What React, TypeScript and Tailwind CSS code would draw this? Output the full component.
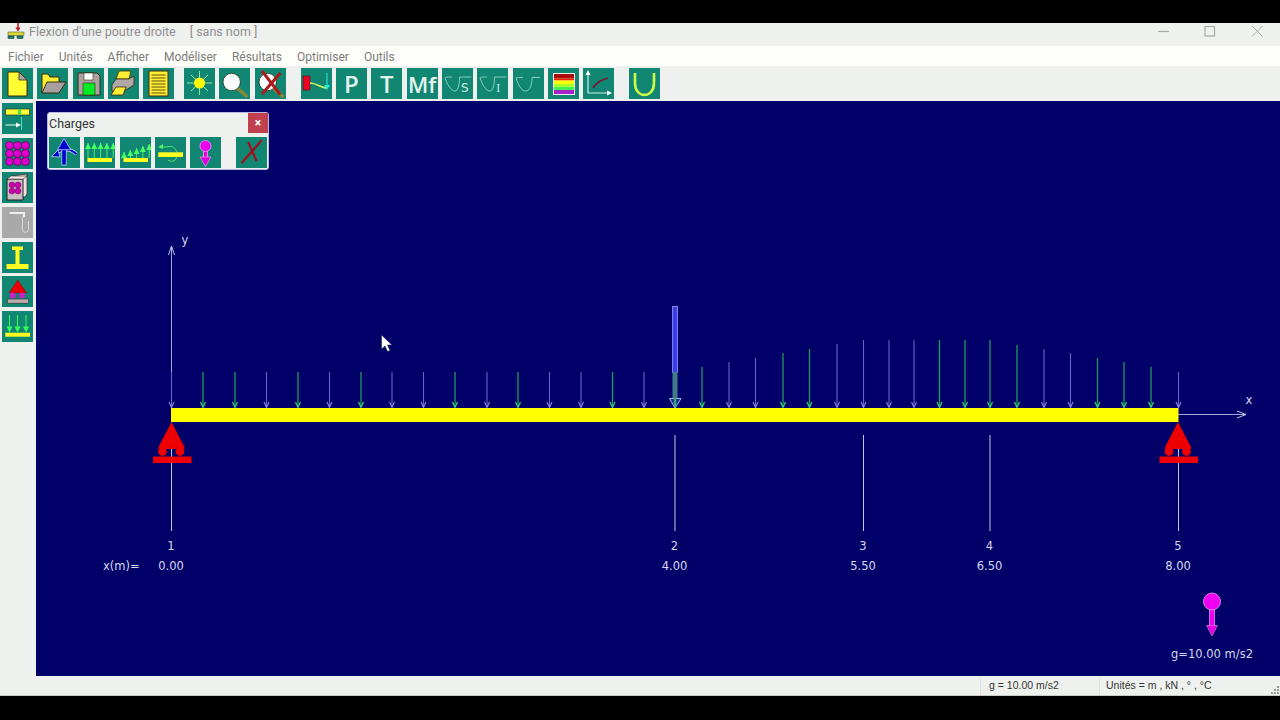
import React from "react";

const UI_FONT = "font-['Roboto','Noto_Sans',sans-serif]";

const Btn = ({ className = "", children }: { className?: string; children?: React.ReactNode }) => (
  <div className={`w-[31px] h-[31px] shrink-0 flex items-center justify-center relative ${className || "bg-[#118672]"}`}>
    {children}
  </div>
);

const Ico = ({ children }: { children: React.ReactNode }) => (
  <svg width="31" height="31" viewBox="0 0 31 31" className="absolute left-0 top-0">
    {children}
  </svg>
);

const Dark = "#3a2a10";

const NewDoc = () => (
  <Ico>
    <path d="M6 4H17L25 12V28H6Z" fill="#ffff33" stroke={Dark} strokeWidth="1" />
    <path d="M17 4L25 12H17Z" fill="#b0a8a0" stroke={Dark} strokeWidth="0.8" />
  </Ico>
);
const OpenFolder = () => (
  <Ico>
    <path d="M5 25V6H11L13 9H22V14" fill="#ffee33" stroke={Dark} strokeWidth="1" />
    <path d="M5 25L10 14H29L22 25Z" fill="#a8a0a0" stroke={Dark} strokeWidth="1" />
  </Ico>
);
const Floppy = () => (
  <Ico>
    <path d="M5 5H24L27 8V27H5Z" fill="#aaa2a2" stroke={Dark} strokeWidth="1" />
    <rect x="11" y="5" width="9" height="7" fill="#ffffff" stroke={Dark} strokeWidth="0.6" />
    <rect x="10" y="15" width="12" height="12" fill="#00ee22" stroke={Dark} strokeWidth="0.6" />
  </Ico>
);
const Printer = () => (
  <Ico>
    <path d="M11 3H23L21 11H8Z" fill="#ffee33" stroke={Dark} strokeWidth="0.8" />
    <path d="M8 11H21L26 8V17L16 23H4V17Z" fill="#b0a8a8" stroke={Dark} strokeWidth="0.8" />
    <path d="M8 19H18L15 27H3Z" fill="#ffee33" stroke={Dark} strokeWidth="0.8" />
  </Ico>
);
const Listing = () => (
  <Ico>
    <rect x="6" y="3" width="19" height="25" fill="#ffee33" stroke={Dark} strokeWidth="1" />
    {[7, 10, 13, 16, 19, 22, 25].map((y) => (
      <line key={y} x1="8.5" x2="22.5" y1={y} y2={y} stroke={Dark} strokeWidth="0.8" />
    ))}
  </Ico>
);
const Sun = () => (
  <Ico>
    <g stroke="#a8f0a0" strokeWidth="0.9">
      <line x1="3" y1="15" x2="28" y2="15" />
      <line x1="15.5" y1="3" x2="15.5" y2="27" />
      <line x1="7" y1="7" x2="24" y2="23" />
      <line x1="24" y1="7" x2="7" y2="23" />
    </g>
    <circle cx="15.5" cy="15" r="5.5" fill="#ffff00" />
  </Ico>
);
const Loupe = ({ crossed }: { crossed?: boolean }) => (
  <Ico>
    <line x1="18" y1="20" x2="28.5" y2="29" stroke="#88883a" strokeWidth="3.4" />
    <circle cx="12.7" cy="14" r="8.7" fill="#ffffff" stroke="#223322" strokeWidth="0.8" />
    {crossed && (
      <g stroke="#aa1a1a" strokeWidth="3">
        <line x1="7" y1="3" x2="25.3" y2="26.7" />
        <line x1="25.3" y1="5" x2="7" y2="26" />
      </g>
    )}
  </Ico>
);
const Deflect = () => (
  <Ico>
    <rect x="2" y="8" width="7" height="14" fill="#ee0022" stroke="#551111" strokeWidth="0.6" />
    <path d="M9 15C15 15 20 20 26 20" fill="none" stroke="#d8f060" strokeWidth="1.6" />
    <line x1="26" y1="5" x2="26" y2="19" stroke="#22eedd" strokeWidth="1" />
    <path d="M23 17H29L26 22Z" fill="#22eedd" />
  </Ico>
);
const Letter = ({ t, size }: { t: string; size: string }) => (
  <span className={`font-['Open_Sans',sans-serif] font-semibold text-[#e4f2ee] leading-none ${size}`}>{t}</span>
);
const Cup = ({ sub }: { sub?: string }) => (
  <>
    <Ico>
      <path
        d={
          sub
            ? "M3 10C5 16 9 23 13 23C16 23 17.5 17 17.5 9H29.5M3 10C3 9 5 9 10 9"
            : "M3 10C5 16 8 23 12.5 23C17 23 19 17 19 9.5H27M3 10C3 9.5 5 9.5 10 9.5"
        }
        fill="none"
        stroke="#8ed8c4"
        strokeWidth="0.9"
      />
    </Ico>
    {sub && (
      <span
        className={`absolute left-[19px] top-[14px] text-[12px] leading-none text-[#d4ece4] ${
          sub === "I" ? "font-['Liberation_Serif',serif]" : "font-['DejaVu_Sans',sans-serif]"
        }`}
      >
        {sub}
      </span>
    )}
  </>
);
const Rainbow = () => (
  <Ico>
    <rect x="5.5" y="5.5" width="21" height="21" fill="#eee" stroke="#eeeeee" strokeWidth="1" />
    <rect x="6" y="6" width="20" height="4.5" fill="#aa0a0a" />
    <rect x="6" y="10.5" width="20" height="2" fill="#ee2200" />
    <rect x="6" y="12.5" width="20" height="3.5" fill="#ffff00" />
    <rect x="6" y="16" width="20" height="3" fill="#aaff33" />
    <rect x="6" y="19" width="20" height="3" fill="#44ee55" />
    <rect x="6" y="22" width="20" height="4" fill="#aa22cc" />
  </Ico>
);
const Graph = () => (
  <Ico>
    <path d="M5 5V25H26" fill="none" stroke="#cfeee8" strokeWidth="1.2" />
    <path d="M2.5 7L5 2L7.5 7Z" fill="#ffffff" />
    <path d="M24 22.5L29 25L24 27.5Z" fill="#ffffff" />
    <path d="M10 20C14 14 18 12 25 10" fill="none" stroke="#7a1830" strokeWidth="1.8" />
  </Ico>
);
const UShape = () => (
  <Ico>
    <path d="M6 5V15C6 31 25 31 25 15V5" fill="none" stroke="#ccff44" strokeWidth="2.6" />
  </Ico>
);

const BeamSection = () => (
  <Ico>
    <rect x="3.5" y="6" width="24" height="6" fill="#ffff33" stroke="#333" strokeWidth="0.7" />
    <rect x="16" y="6" width="3" height="6" fill="#44dd44" />
    <line x1="3.5" y1="22" x2="17" y2="22" stroke="#eeffee" strokeWidth="1" />
    <path d="M14 19.5L19 22L14 24.5Z" fill="#ffffff" />
    <line x1="19.5" y1="14" x2="19.5" y2="27" stroke="#44ddcc" strokeWidth="1" />
  </Ico>
);
const Dots = () => (
  <Ico>
    {[7.5, 15.5, 23.5].map((y) =>
      [7.5, 15.5, 23.5].map((x) => (
        <circle key={`${x}-${y}`} cx={x} cy={y} r="4" fill="#dd00cc" stroke="#441144" strokeWidth="0.7" />
      ))
    )}
  </Ico>
);
const Stack = () => (
  <Ico>
    <path d="M9 4L25 2V22L23 25H9Z" fill="#f4e0e0" stroke="#333" strokeWidth="0.8" />
    <path d="M5 7H21V28H5Z" fill="#c8c0c0" stroke="#222" strokeWidth="1" />
    <path d="M5 7L9 4H25L21 7Z" fill="#f8e8e8" stroke="#333" strokeWidth="0.6" />
    {[13, 19].map((y) =>
      [10, 16].map((x) => <circle key={`${x}-${y}`} cx={x} cy={y} r="3" fill="#cc00aa" stroke="#551155" strokeWidth="0.4" />)
    )}
  </Ico>
);
const Pipe = () => (
  <Ico>
    <path d="M7.5 6H22V10" fill="none" stroke="#eeeeee" strokeWidth="2.2" />
    <path d="M20.5 10V23C20.5 26 26.5 26 26.5 23V14" fill="none" stroke="#dddddd" strokeWidth="0.9" />
  </Ico>
);
const IBeam = () => (
  <Ico>
    <rect x="10" y="4.5" width="11" height="3.5" fill="#ffff22" />
    <rect x="13.5" y="8" width="4" height="14" fill="#ffff22" />
    <rect x="4.5" y="22" width="22" height="5" fill="#ffff22" />
  </Ico>
);
const Support = () => (
  <Ico>
    <path d="M15.7 4L24.7 17H7Z" fill="#ee0000" stroke="#661111" strokeWidth="0.5" />
    <circle cx="10.7" cy="19.5" r="3" fill="#cc22cc" />
    <circle cx="20" cy="19.5" r="3" fill="#cc22cc" />
    <rect x="5.3" y="23" width="21.4" height="4.3" rx="1" fill="#bbb0b0" stroke="#333" strokeWidth="0.7" />
  </Ico>
);
const DownLoads = () => (
  <Ico>
    {[7.5, 15.5, 24].map((x) => (
      <g key={x}>
        <line x1={x} y1="4" x2={x} y2="18" stroke="#33ff55" strokeWidth="1" />
        <path d={`M${x - 3} 15.5H${x + 3}L${x} 21.5Z`} fill="#33ff55" />
      </g>
    ))}
    <rect x="3.3" y="21.7" width="24.7" height="4" fill="#ffff22" />
  </Ico>
);

const UpArrowLoad = () => (
  <Ico>
    <path d="M7 17C12 11 21 11 27.5 17" fill="none" stroke="#bfe8ff" strokeWidth="3.4" />
    <path d="M7 17C12 11 21 11 27.5 17" fill="none" stroke="#0000cc" strokeWidth="2" />
    <path d="M9 13L2.5 19.5L11 20Z" fill="#0000cc" stroke="#bfe8ff" strokeWidth="0.7" />
    <rect x="12.8" y="12" width="4.4" height="16" fill="#0000cc" stroke="#bfe8ff" strokeWidth="0.7" />
    <path d="M15 1.5L21.7 12.7H8.5Z" fill="#0000cc" stroke="#bfe8ff" strokeWidth="0.7" />
  </Ico>
);
const GreenUp = ({ tops }: { tops: number[] }) => (
  <Ico>
    {tops.map((t, i) => {
      const x = 3 + i * 6.3;
      return (
        <g key={i}>
          <line x1={x + 1} y1={t} x2={x + 1} y2="21" stroke="#44ff66" strokeWidth="0.9" />
          <path d={`M${x - 2} ${t + 6}L${x + 1} ${t}L${x + 4} ${t + 6}Z`} fill="#44ff66" />
        </g>
      );
    })}
    <rect x="3.5" y="21" width="24.5" height="4" fill="#ffff22" />
  </Ico>
);
const MomentLoad = () => (
  <Ico>
    <rect x="3.3" y="15.3" width="24.7" height="4.7" fill="#ffff22" />
    <path d="M5 10H12C18 8 20 11 22 15M22 20C20 25 16 25 13 23" fill="none" stroke="#55ee66" strokeWidth="0.9" />
    <path d="M8 7L3 10L8 12Z" fill="#55ee66" />
  </Ico>
);
const MassLoad = () => (
  <Ico>
    <rect x="13.5" y="13" width="4" height="9" fill="#ee00dd" stroke="#f8b0f8" strokeWidth="0.7" />
    <circle cx="15.5" cy="9" r="5.5" fill="#ee00ee" stroke="#f8b0f8" strokeWidth="0.7" />
    <path d="M10 20H21L15.5 29.5Z" fill="#dd00dd" stroke="#f8b0f8" strokeWidth="0.6" />
  </Ico>
);
const RedCross = () => (
  <Ico>
    <g stroke="#a01020" strokeWidth="2.2">
      <line x1="25.7" y1="3.3" x2="5.7" y2="26" />
      <line x1="12.3" y1="5.3" x2="20.7" y2="24.3" />
    </g>
  </Ico>
);

type Tool = { gap: string; node: React.ReactNode };

const TOOLS: Tool[] = [
  { gap: "ml-0", node: <NewDoc /> },
  { gap: "ml-[4.33px]", node: <OpenFolder /> },
  { gap: "ml-[4.33px]", node: <Floppy /> },
  { gap: "ml-[4.33px]", node: <Printer /> },
  { gap: "ml-[4.33px]", node: <Listing /> },
  { gap: "ml-[9.67px]", node: <Sun /> },
  { gap: "ml-[4.33px]", node: <Loupe /> },
  { gap: "ml-[4.33px]", node: <Loupe crossed /> },
  { gap: "ml-[15px]", node: <Deflect /> },
  { gap: "ml-[4.33px]", node: <Letter t="P" size="text-[24px]" /> },
  { gap: "ml-[4.33px]", node: <Letter t="T" size="text-[24px]" /> },
  { gap: "ml-[4.33px]", node: <Letter t="Mf" size="text-[22px]" /> },
  { gap: "ml-[4.33px]", node: <Cup sub="S" /> },
  { gap: "ml-[4.33px]", node: <Cup sub="I" /> },
  { gap: "ml-[4.33px]", node: <Cup /> },
  { gap: "ml-[4.33px]", node: <Rainbow /> },
  { gap: "ml-[4.33px]", node: <Graph /> },
  { gap: "ml-[15px]", node: <UShape /> },
];

const MENUS = ["Fichier", "Unités", "Afficher", "Modéliser", "Résultats", "Optimiser", "Outils"];

const GREEN = "#1f9a58";
const BLUE = "#6464d4";

// x, top of the shaft, green or not
const LOADS: [number, number, boolean][] = [
  [171.5, 372, false], [203, 372, true], [235, 372, true], [266.5, 372, false], [298, 372, true],
  [329.5, 372, false], [361, 372, true], [392, 372, false], [423.5, 372, false], [455, 372, true],
  [487, 372, false], [518, 372, true], [549.5, 372, false], [581, 372, false], [612.5, 372, true],
  [644, 372, false], [702, 367, true], [729, 362, false], [755.5, 358, false], [783, 353, true],
  [809.5, 349, true], [837, 344, false], [863.5, 340, false], [889, 340, false], [914, 340, false],
  [939.5, 340, true], [965, 340, true], [990, 340, true], [1017, 345, true], [1044, 349, false],
  [1070.5, 353, false], [1097.5, 358, true], [1124, 362, true], [1151, 367, true], [1178.5, 372, false],
];

const NODES: [number, string, string][] = [
  [171, "1", "0.00"],
  [674.5, "2", "4.00"],
  [863, "3", "5.50"],
  [989.5, "4", "6.50"],
  [1178, "5", "8.00"],
];

const SupportMark = ({ x }: { x: number }) => (
  <g fill="#ee0000">
    <path d={`M${x} 422L${x + 13} 447V449H${x - 13}V447Z`} />
    <circle cx={x - 9} cy="451.5" r="4.4" />
    <circle cx={x + 8.5} cy="451.5" r="4.4" />
    <rect x={x - 18.5} y="456.5" width="38.5" height="6.5" />
  </g>
);

const Drawing = () => (
  <svg width="1244" height="575" viewBox="36 101 1244 575" className="absolute left-0 top-0">
    {/* axes */}
    <line x1="171.5" y1="246" x2="171.5" y2="408" stroke="#a8a8e0" strokeWidth="1" />
    <path d="M168.5 255L171.5 246L174.5 255" fill="none" stroke="#c8c8f0" strokeWidth="1" />
    <line x1="1178" y1="414.5" x2="1246" y2="414.5" stroke="#a8a8e0" strokeWidth="1" />
    <path d="M1237 411L1246 414.5L1237 418" fill="none" stroke="#c8c8f0" strokeWidth="1" />

    {LOADS.map(([x, top, green]) => (
      <g key={x} fill="none" stroke={green ? GREEN : BLUE} strokeWidth={green ? 1.3 : 1.1}>
        <line x1={x} y1={top} x2={x} y2="407" />
        <path d={`M${x - 2.5} 402L${x} 407.5L${x + 2.5} 402`} stroke={green ? "#33cc77" : "#8888dd"} />
      </g>
    ))}

    {/* point load */}
    <rect x="672.5" y="306.5" width="5" height="66" fill="#3c3cf0" stroke="#9a9af0" strokeWidth="0.8" />
    <rect x="672.5" y="372" width="5" height="30" fill="#3f7a88" />
    <path d="M669.5 398.5H681L675 408Z" fill="#10307a" stroke="#9ab8f0" strokeWidth="1" />
    <line x1="675" y1="398" x2="675" y2="407" stroke="#3f9a88" strokeWidth="2.5" />

    <rect x="171" y="408" width="1007.5" height="14" fill="#ffff00" />

    {/* node lines */}
    {[171.5, 675, 863.5, 990, 1178.5].map((x) => (
      <line key={x} x1={x} y1="435" x2={x} y2="531" stroke="#c4c4e4" strokeWidth="1" />
    ))}
    <SupportMark x={171.5} />
    <SupportMark x={1178} />
    <line x1="171.5" y1="449" x2="171.5" y2="456" stroke="#c4c4e4" strokeWidth="1" />
    <line x1="1178.5" y1="449" x2="1178.5" y2="456" stroke="#c4c4e4" strokeWidth="1" />

    <g fill="#d8d8ec" fontFamily="'DejaVu Sans', sans-serif" fontSize="11.5">
      <text x="185" y="244" textAnchor="middle">y</text>
      <text x="1249" y="404" textAnchor="middle">x</text>
      {NODES.map(([x, n, v]) => (
        <React.Fragment key={n}>
          <text x={x} y="550" textAnchor="middle">{n}</text>
          <text x={x} y="570" textAnchor="middle">{v}</text>
        </React.Fragment>
      ))}
      <text x="103" y="570">x(m)=</text>
      <text x="1212" y="658" textAnchor="middle">g=10.00 m/s2</text>
    </g>

    {/* gravity */}
    <rect x="1209.5" y="609" width="5" height="18" fill="#ee00ee" stroke="#f0a0f0" strokeWidth="0.7" />
    <circle cx="1212" cy="601.5" r="8.5" fill="#f000f0" stroke="#e8a0e8" strokeWidth="0.8" />
    <path d="M1206.5 625.5H1217.5L1212 636Z" fill="#e000e0" stroke="#e8a0e8" strokeWidth="0.5" />

    {/* mouse pointer */}
    <path d="M381.5 335V349L385 346L387.5 351.5L390 350.5L387.5 345H392Z" fill="#ffffff" stroke="#111133" strokeWidth="0.5" />
  </svg>
);

const App: React.FC = () => {
  return (
    <div className="w-[1280px] h-[720px] bg-black pt-[23px] overflow-hidden">
      <div className={`h-[673px] flex flex-col bg-[#eff1ee] ${UI_FONT}`}>
        {/* title bar */}
        <div className="h-[23px] shrink-0 flex items-center pl-[7px] pb-[5px] text-[#8e8e8e] text-[12.5px]">
          <svg width="18" height="16" viewBox="0 0 18 16" className="shrink-0 self-start">
            <line x1="11" y1="0" x2="11" y2="6" stroke="#cc1111" strokeWidth="1.5" />
            <path d="M8.5 4.5H13.5L11 8.5Z" fill="#cc1111" />
            <rect x="1" y="9" width="16" height="3.5" fill="#d8d830" stroke="#444" strokeWidth="0.5" />
            <rect x="1" y="13" width="6" height="2.5" fill="#118672" stroke="#222" strokeWidth="0.5" />
            <rect x="10" y="13" width="6" height="2.5" fill="#118672" stroke="#222" strokeWidth="0.5" />
          </svg>
          <span className="ml-[4px] whitespace-pre">Flexion d'une poutre droite</span>
          <span className="ml-[14px] whitespace-pre">[ sans nom ]</span>
          <svg width="122" height="14" viewBox="0 0 122 14" className="ml-auto self-start mt-[1px]" fill="none" stroke="#aaaaaa">
            <line x1="0" y1="7.5" x2="11" y2="7.5" strokeWidth="1.2" />
            <rect x="47" y="2.5" width="9.5" height="9.5" strokeWidth="1.2" />
            <path d="M94 2L104.5 12.5M104.5 2L94 12.5" strokeWidth="1" />
          </svg>
        </div>

        {/* menu bar */}
        <div className="h-[20px] shrink-0 bg-[#fefefa] flex items-center pl-[8px] pt-[1px] gap-[15px] text-[12px] text-[#7c7c7c]">
          {MENUS.map((m) => (
            <span key={m}>{m}</span>
          ))}
        </div>

        {/* toolbar */}
        <div className="h-[35px] shrink-0 flex items-start pt-[2px] pl-[2px]">
          {TOOLS.map((t, i) => (
            <div key={i} className={t.gap}>
              <Btn>{t.node}</Btn>
            </div>
          ))}
        </div>

        <div className="flex-1 flex min-h-0">
          {/* left toolbar */}
          <div className="w-[36px] shrink-0 flex flex-col gap-[3.67px] pt-[2px] pl-[2px]">
            <Btn><BeamSection /></Btn>
            <Btn><Dots /></Btn>
            <Btn><Stack /></Btn>
            <Btn className="bg-[#a9a9a9]"><Pipe /></Btn>
            <Btn><IBeam /></Btn>
            <Btn><Support /></Btn>
            <Btn><DownLoads /></Btn>
          </div>

          {/* canvas */}
          <div className="flex-1 relative bg-[#000068] overflow-hidden">
            <Drawing />
            {/* floating palette */}
            <div className="absolute left-[11px] top-[11px] w-[222px] h-[58px] bg-[#eff1ee] rounded-[3px] border border-[#b8b8e0]">
              <div className="absolute left-[1px] top-[2px] text-[12.5px] text-[#333333]">Charges</div>
              <div className="absolute right-0 top-0 w-[20px] h-[20px] bg-[#c0404f] flex items-center justify-center text-white text-[12px] font-bold leading-none">
                ×
              </div>
              <div className="absolute left-[1px] top-[24px] flex gap-[4.33px]">
                <Btn><UpArrowLoad /></Btn>
                <Btn><GreenUp tops={[6, 6, 6, 6, 6]} /></Btn>
                <Btn><GreenUp tops={[15, 13, 11, 9, 7]} /></Btn>
                <Btn><MomentLoad /></Btn>
                <Btn><MassLoad /></Btn>
                <div className="ml-[10.67px]">
                  <Btn><RedCross /></Btn>
                </div>
              </div>
            </div>
          </div>
        </div>

        {/* status bar */}
        <div className="h-[20px] shrink-0 flex items-center pt-[1px] text-[10.5px] text-[#333333] font-['Liberation_Sans',sans-serif] border-b border-[#c8c8c8] relative">
          <div className="ml-[980px] w-[119px] pl-[8px] border-l border-[#e2e2e0] h-full flex items-center">g = 10.00 m/s2</div>
          <div className="pl-[6px] border-l border-[#e2e2e0] h-full flex items-center">Unités = m , kN , ° , °C</div>
          <svg width="10" height="10" viewBox="0 0 10 10" className="absolute right-0 bottom-0" fill="#999999">
            <rect x="7" y="1" width="2" height="2" />
            <rect x="4" y="4" width="2" height="2" />
            <rect x="7" y="4" width="2" height="2" />
            <rect x="1" y="7" width="2" height="2" />
            <rect x="4" y="7" width="2" height="2" />
            <rect x="7" y="7" width="2" height="2" />
          </svg>
        </div>
      </div>
    </div>
  );
};

export default App;
